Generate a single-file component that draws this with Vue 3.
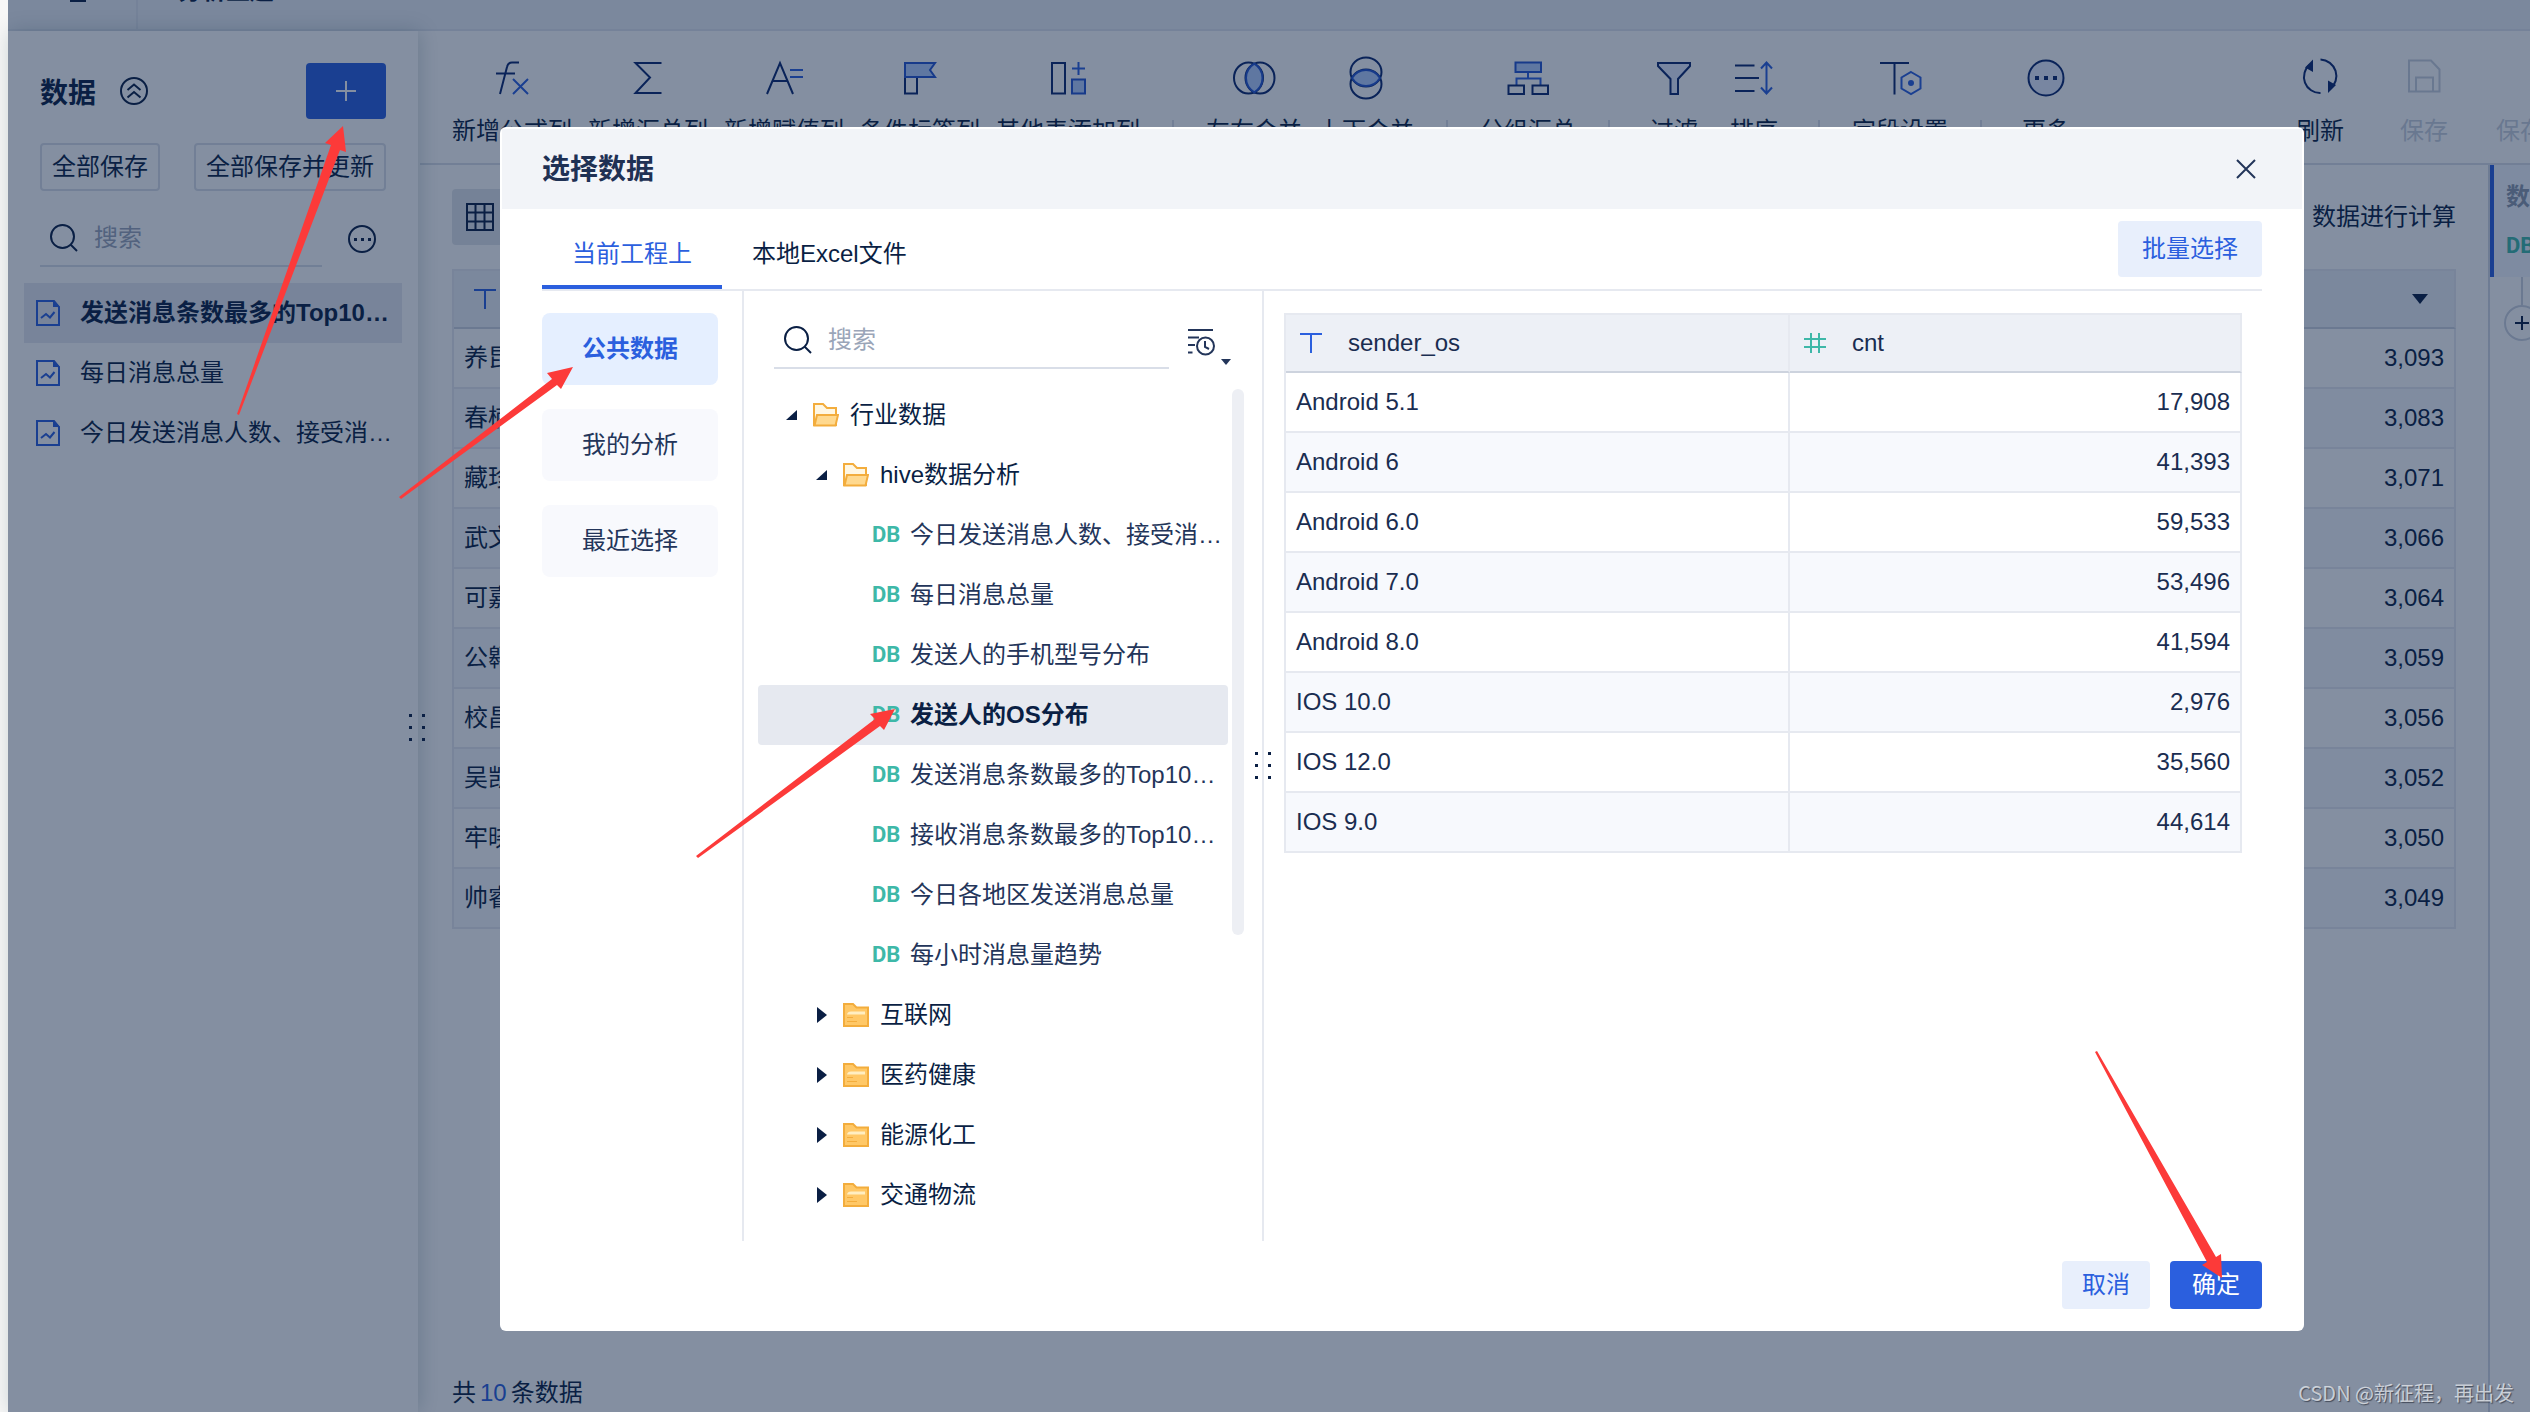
<script setup>
import { ref } from 'vue'

const tools = [
  [
    { icon: 'fx', label: '新增公式列' },
    { icon: 'sum', label: '新增汇总列' },
    { icon: 'assign', label: '新增赋值列' },
    { icon: 'flag', label: '条件标签列' },
    { icon: 'addcol', label: '其他表添加列' },
  ],
  [
    { icon: 'joinh', label: '左右合并' },
    { icon: 'joinv', label: '上下合并' },
  ],
  [{ icon: 'group', label: '分组汇总' }],
  [
    { icon: 'filter', label: '过滤' },
    { icon: 'sort', label: '排序' },
  ],
  [{ icon: 'field', label: '字段设置' }],
  [{ icon: 'more', label: '更多' }],
]

const datasets = ['发送消息条数最多的Top10…', '每日消息总量', '今日发送消息人数、接受消…']

const rankRows = [
  ['养昆', '3,093'],
  ['春楠', '3,083'],
  ['藏珍', '3,071'],
  ['武文', '3,066'],
  ['可嘉', '3,064'],
  ['公翱', '3,059'],
  ['校昌', '3,056'],
  ['吴凯', '3,052'],
  ['牢晓', '3,050'],
  ['帅睿', '3,049'],
]

const sources = ['公共数据', '我的分析', '最近选择']
const activeSource = ref(0)

const tree = [
  { level: 1, type: 'open', label: '行业数据' },
  { level: 2, type: 'open', label: 'hive数据分析' },
  { level: 3, type: 'db', label: '今日发送消息人数、接受消…' },
  { level: 3, type: 'db', label: '每日消息总量' },
  { level: 3, type: 'db', label: '发送人的手机型号分布' },
  { level: 3, type: 'db', label: '发送人的OS分布' },
  { level: 3, type: 'db', label: '发送消息条数最多的Top10…' },
  { level: 3, type: 'db', label: '接收消息条数最多的Top10…' },
  { level: 3, type: 'db', label: '今日各地区发送消息总量' },
  { level: 3, type: 'db', label: '每小时消息量趋势' },
  { level: 2, type: 'closed', label: '互联网' },
  { level: 2, type: 'closed', label: '医药健康' },
  { level: 2, type: 'closed', label: '能源化工' },
  { level: 2, type: 'closed', label: '交通物流' },
]
const activeNode = ref(5)

const preview = [
  ['Android 5.1', '17,908'],
  ['Android 6', '41,393'],
  ['Android 6.0', '59,533'],
  ['Android 7.0', '53,496'],
  ['Android 8.0', '41,594'],
  ['IOS 10.0', '2,976'],
  ['IOS 12.0', '35,560'],
  ['IOS 9.0', '44,614'],
]
</script>

<template>
  <div class="page">
    <svg class="sprite" width="0" height="0" aria-hidden="true">
      <symbol id="i-fx" viewBox="0 0 48 48">
        <path class="ln" d="M12 41L19 14Q20 9.500 24 9.500H31M8 20.500H27" />
        <path class="bl" d="M25 26L40 41M40 26L25 41" />
      </symbol>
      <symbol id="i-sum" viewBox="0 0 48 48">
        <path class="ln" d="M37.500 10H11.500L26 24.500L11.500 40H37.500" />
      </symbol>
      <symbol id="i-assign" viewBox="0 0 48 48">
        <path class="ln" d="M7 41L20 10L33 41M12.500 28H27.500" />
        <path class="bl" d="M30 17H43M30 24H43" />
      </symbol>
      <symbol id="i-flag" viewBox="0 0 48 48">
        <path class="ln" d="M9 24V40.500H21V24" />
        <path class="bf" d="M9 10H39L34 17L39 24H9Z" />
      </symbol>
      <symbol id="i-addcol" viewBox="0 0 48 48">
        <path class="ln" d="M8 10H21V40.500H8Z" />
        <path class="bl" d="M34.500 9V22M28 15.500H41" />
        <path class="bf" d="M28 26.500H41V40.500H28Z" />
      </symbol>
      <symbol id="i-joinh" viewBox="0 0 48 48">
        <ellipse class="ln" cx="18.500" cy="25" rx="14.500" ry="15.500" />
        <ellipse class="ln" cx="30" cy="25" rx="14.500" ry="15.500" />
        <path class="bf" d="M24.300 10.700Q32.500 16 32.500 25T24.300 39.300Q16 34 16 25T24.300 10.700Z" />
      </symbol>
      <symbol id="i-joinv" viewBox="0 0 48 48">
        <ellipse class="ln" cx="24" cy="19" rx="15.500" ry="14.500" />
        <ellipse class="ln" cx="24" cy="31" rx="15.500" ry="14.500" />
        <path class="bf" d="M10 25Q15 17 24 17T38 25Q33 33 24 33T10 25Z" />
      </symbol>
      <symbol id="i-group" viewBox="0 0 48 48">
        <path class="bl" d="M24 19V25M12.500 32V25.500H36.500V32" />
        <path class="bf" d="M11.500 9.500H37V19H11.500Z" />
        <path class="ln" d="M4.500 32.500H20V41H4.500ZM28.500 32.500H44V41H28.500Z" />
      </symbol>
      <symbol id="i-filter" viewBox="0 0 48 48">
        <path class="ln soft" d="M8 10H40V13L28 26V41H20.500V26L8 13Z" />
      </symbol>
      <symbol id="i-sort" viewBox="0 0 48 48">
        <path class="ln" d="M5 12.500H24.500M5 25H29M5 38H24.500" />
        <path class="bl" d="M36.500 10V40M31 15.500L36.500 9.500L42 15.500M31 34.500L36.500 40.500L42 34.500" />
      </symbol>
      <symbol id="i-field" viewBox="0 0 48 48">
        <path class="ln" d="M4 10H33M18.500 10V41.500" />
        <path class="bl" d="M35 19L44.500 24.500V35.500L35 41L25.500 35.500V24.500Z" />
        <circle class="bd" cx="35" cy="30" r="3" />
      </symbol>
      <symbol id="i-more" viewBox="0 0 48 48">
        <circle class="ln soft" cx="24" cy="25" r="17.500" />
        <path class="dk" d="M13 23H17V27H13ZM22 23H26V27H22ZM31 23H35V27H31Z" />
      </symbol>
      <symbol id="i-refresh" viewBox="0 0 48 48">
        <path class="ln" d="M24.500 40A16 16 0 0 1 14 11.500M24.500 6.500A16.500 16.500 0 0 1 34 36" />
        <path class="dk" d="M17 6.500V19L9 14.500ZM32 40V27.500L40 32Z" />
      </symbol>
      <symbol id="i-save" viewBox="0 0 48 48">
        <path class="gy" d="M9 7.500H31L39.500 16.500V38.500H9ZM16 38V24.500H33V38" />
      </symbol>
      <symbol id="i-search" viewBox="0 0 28 28">
        <circle class="nv" cx="12.500" cy="12.500" r="11.500" />
        <path class="nv" d="M20.500 20.500L27 27" />
      </symbol>
      <symbol id="i-text" viewBox="0 0 22 20">
        <path class="bl" d="M0 1H22M11 1V20" />
      </symbol>
      <symbol id="i-num" viewBox="0 0 22 20">
        <path class="gn" d="M0 6H22M0 14H22M7 0V20M15 0V20" />
      </symbol>
      <symbol id="i-open" viewBox="0 0 26 24">
        <path class="fo" d="M1 1H10L14 5H23V22H1Z" />
        <path class="ff" d="M4 12H25L22.500 22.500H1.500Z" />
      </symbol>
      <symbol id="i-closed" viewBox="0 0 26 24">
        <path class="fc" d="M1 1H10L13.500 4.500H25V23H1Z" />
        <path class="fh" d="M4 11.500Q4.500 8.500 8 8.500H22V11.500Z" />
        <path class="fl" d="M4 14.500H10M4 18.500H14" />
      </symbol>
      <symbol id="i-chart" viewBox="0 0 24 26">
        <path class="bl" d="M1 1H18L23 7V25H1Z" />
        <path class="bd" d="M17 0L24 7H17Z" />
        <path class="bl" d="M5 18L10 14L14 17.500L18.500 12" />
      </symbol>
    </svg>

    <div class="shell">
      <header class="topbar">
        <div class="top-left"><i class="top-mark"></i></div>
        <div class="top-title">分析主题</div>
      </header>

      <div class="workspace">
        <aside class="side">
          <div class="side-head">
            <h2>数据</h2>
            <svg width="28" height="28" viewBox="0 0 28 28">
              <circle class="nv" cx="14" cy="14" r="13" />
              <path class="nv" d="M7.500 13L14 7.500L20.500 13M7.500 20.500L14 15L20.500 20.500" />
            </svg>
            <button class="add" type="button" aria-label="+">
              <svg width="20" height="20" viewBox="0 0 20 20"><path class="wh" d="M0 10H20M10 0V20" /></svg>
            </button>
          </div>
          <div class="side-actions">
            <button type="button">全部保存</button>
            <button type="button">全部保存并更新</button>
          </div>
          <div class="side-search">
            <label class="search">
              <svg width="28" height="28"><use href="#i-search" /></svg>
              <input type="text" placeholder="搜索" />
            </label>
            <svg width="28" height="28" viewBox="0 0 28 28">
              <circle class="nv" cx="14" cy="14" r="13" />
              <path class="nd" d="M6 13H9V16H6ZM13 13H16V16H13ZM20 13H23V16H20Z" />
            </svg>
          </div>
          <ul class="datasets">
            <li v-for="(name, i) in datasets" :key="name" :class="{ on: i === 0 }">
              <svg width="24" height="26"><use href="#i-chart" /></svg>
              <span>{{ name }}</span>
            </li>
          </ul>
          <div class="grip side-grip"><i v-for="n in 6" :key="n"></i></div>
        </aside>

        <main class="main">
          <div class="toolbar">
            <div v-for="(group, g) in tools" :key="g" class="tool-group">
              <button v-for="t in group" :key="t.label" class="tool" type="button">
                <svg width="48" height="48"><use :href="'#i-' + t.icon" /></svg>
                <span>{{ t.label }}</span>
              </button>
            </div>
            <div class="tool-end">
              <button class="tool" type="button">
                <svg width="48" height="48"><use href="#i-refresh" /></svg>
                <span>刷新</span>
              </button>
              <button class="tool off" type="button" disabled>
                <svg width="48" height="48"><use href="#i-save" /></svg>
                <span>保存</span>
              </button>
              <button class="tool off" type="button" disabled>
                <svg width="48" height="48"></svg>
                <span>保存并更新</span>
              </button>
            </div>
          </div>

          <div class="content">
            <section class="sheet">
              <div class="sheet-bar">
                <button class="view" type="button" aria-label="grid">
                  <svg width="28" height="28" viewBox="0 0 28 28">
                    <path class="nv" d="M1 1H27V27H1ZM1 9.500H27M1 18.500H27M9.500 1V27M18.500 1V27" />
                  </svg>
                </button>
                <span>数据进行计算</span>
              </div>
              <table class="grid">
                <thead>
                  <tr>
                    <th><svg width="22" height="20"><use href="#i-text" /></svg></th>
                    <th class="num">
                      <svg width="16" height="10" viewBox="0 0 16 10"><path class="nd" d="M0 0H16L8 10Z" /></svg>
                    </th>
                  </tr>
                </thead>
                <tbody>
                  <tr v-for="r in rankRows" :key="r[0]">
                    <td>{{ r[0] }}</td>
                    <td class="num">{{ r[1] }}</td>
                  </tr>
                </tbody>
              </table>
              <p class="total"><span>共</span><b>10</b><span>条数据</span></p>
            </section>
            <aside class="steps">
              <div class="step">
                <strong>数据</strong>
                <span class="db">DB</span>
              </div>
              <i class="stem"></i>
              <button class="plus" type="button" aria-label="+">
                <svg width="14" height="14" viewBox="0 0 14 14"><path class="nv" d="M0 7H14M7 0V14" /></svg>
              </button>
            </aside>
          </div>
        </main>
      </div>
    </div>

    <div class="mask">
      <div class="dialog" role="dialog">
        <div class="dialog-head">
          <h1>选择数据</h1>
          <button type="button" aria-label="×">
            <svg width="20" height="20" viewBox="0 0 20 20"><path class="dx" d="M1 1L19 19M19 1L1 19" /></svg>
          </button>
        </div>

        <div class="dialog-tabs">
          <button class="tab on" type="button">当前工程上</button>
          <button class="tab" type="button">本地Excel文件</button>
          <button class="btn batch" type="button">批量选择</button>
        </div>

        <div class="dialog-body">
          <nav class="sources">
            <button
              v-for="(s, i) in sources"
              :key="s"
              type="button"
              :class="{ on: i === activeSource }"
              @click="activeSource = i"
            >
              {{ s }}
            </button>
          </nav>

          <section class="picker">
            <div class="picker-search">
              <label class="search">
                <svg width="28" height="28"><use href="#i-search" /></svg>
                <input type="text" placeholder="搜索" />
              </label>
              <svg width="44" height="52" viewBox="0 -12 44 52">
                <path class="dx" d="M0 3H25M0 10.500H11M0 18H7M0 25.500H4.500" />
                <circle class="dx" cx="17.500" cy="19" r="8.500" />
                <path class="dx" d="M17 14V20L21 22" />
                <path class="dd" d="M33 32H43L38 38Z" />
              </svg>
            </div>
            <ul class="tree">
              <li
                v-for="(n, i) in tree"
                :key="i"
                :class="['lv' + n.level, { on: i === activeNode }]"
                @click="activeNode = i"
              >
                <template v-if="n.type === 'db'">
                  <span class="db">DB</span>
                </template>
                <template v-else>
                  <svg v-if="n.type === 'open'" width="12" height="12" viewBox="0 0 12 12">
                    <path class="nd" d="M11 1V11H0Z" />
                  </svg>
                  <svg v-else width="12" height="16" viewBox="0 0 12 16"><path class="nd" d="M1 0V16L11 8Z" /></svg>
                  <svg class="folder" width="26" height="24"><use :href="'#i-' + n.type" /></svg>
                </template>
                <span>{{ n.label }}</span>
              </li>
            </ul>
            <i class="thumb"></i>
            <div class="grip picker-grip"><i v-for="n in 6" :key="n"></i></div>
          </section>

          <section class="preview">
            <table class="grid">
              <thead>
                <tr>
                  <th>
                    <div><svg width="22" height="20"><use href="#i-text" /></svg>sender_os</div>
                  </th>
                  <th>
                    <div><svg width="22" height="20"><use href="#i-num" /></svg>cnt</div>
                  </th>
                </tr>
              </thead>
              <tbody>
                <tr v-for="r in preview" :key="r[0]">
                  <td>{{ r[0] }}</td>
                  <td class="num">{{ r[1] }}</td>
                </tr>
              </tbody>
            </table>
          </section>
        </div>

        <div class="dialog-foot">
          <button class="btn cancel" type="button">取消</button>
          <button class="btn ok" type="button">确定</button>
        </div>
      </div>
    </div>

    <svg class="arrows" viewBox="0 0 2530 1412" aria-hidden="true">
      <path d="M237 414L331 145L325 143L343 126L346 152L340 150L239 415Z" />
      <path d="M399 497L552 379L547 373L573 367L561 389L557 385L401 499Z" />
      <path d="M696 856L875 719L870 714L895 709L884 730L880 726L698 858Z" />
      <path d="M2097 1051L2216 1257L2221 1254L2222 1278L2202 1265L2207 1262L2095 1052Z" />
    </svg>

    <p class="watermark">CSDN @新征程，再出发</p>
  </div>
</template>

<style>
body {
  margin: 0;
  background: #f7f7f7;
}
</style>

<style scoped>
* {
  box-sizing: border-box;
}
.page {
  position: relative;
  height: 100vh;
  min-height: 1100px;
  padding-left: 8px;
  overflow: hidden;
  font: 24px/32px "Liberation Sans", "Noto Sans CJK SC", sans-serif;
  color: #0a1f44;
}
.sprite {
  position: absolute;
}
svg {
  display: block;
  flex: none;
}
button,
input {
  font: inherit;
  color: inherit;
  border: 0;
  background: none;
  padding: 0;
  margin: 0;
}
h1,
h2,
p,
ul {
  margin: 0;
  padding: 0;
  list-style: none;
}

.ln,
.bl,
.bf,
.gy,
.nv,
.wh,
.dx,
.gn {
  fill: none;
  stroke-width: 2px;
}
.ln {
  stroke: #0a276e;
}
.bl {
  stroke: #2b5fde;
}
.bf {
  stroke: #2455d0;
  fill: #b4cfff;
}
.soft {
  fill: #e6ecff;
}
.gy {
  stroke: #c9d0dc;
}
.nv {
  stroke: #0a1f44;
}
.wh {
  stroke: #fff;
}
.dx {
  stroke: #23355a;
}
.gn {
  stroke: #3eb8a8;
}
.bd {
  fill: #2b5fde;
}
.dk {
  fill: #0a276e;
}
.nd {
  fill: #0a1f44;
}
.dd {
  fill: #23355a;
}
.fo {
  fill: #fff7e3;
  stroke: #f3ad3d;
  stroke-width: 2px;
}
.ff {
  fill: #ffd98f;
  stroke: #f3ad3d;
  stroke-width: 2px;
}
.fc {
  fill: #ffc867;
  stroke: #f3ad3d;
  stroke-width: 2px;
}
.fh {
  fill: #ffeec2;
}
.fl {
  stroke: #f3ad3d;
}

.shell {
  display: flex;
  flex-direction: column;
  height: 100%;
  background: #fff;
}
.topbar {
  display: flex;
  flex: none;
  height: 31px;
  overflow: hidden;
  background: #ecf0f6;
  border-bottom: 2px solid #e0e5ee;
}
.top-left {
  width: 130px;
  border-right: 2px solid #e0e5ee;
  padding-left: 62px;
}
.top-mark {
  display: block;
  width: 16px;
  height: 2px;
  background: #0a1f44;
}
.top-title {
  margin-top: -25px;
  padding-left: 40px;
  font-weight: 700;
}
.workspace {
  display: flex;
  flex: 1;
  min-height: 0;
}

.side {
  position: relative;
  z-index: 1;
  flex: none;
  width: 410px;
  background: #fff;
  box-shadow: 2px 0 20px rgba(10, 50, 60, 0.2);
}
.side-head {
  display: flex;
  align-items: center;
  gap: 24px;
  padding: 32px 32px 0;
}
.side-head h2 {
  padding-top: 6px;
  font-size: 28px;
}
.add {
  display: grid;
  place-items: center;
  width: 80px;
  height: 56px;
  margin-left: auto;
  border-radius: 4px;
  background: #2b5fde;
}
.side-actions {
  display: flex;
  justify-content: space-between;
  padding: 24px 32px 0;
}
.side-actions button {
  height: 48px;
  padding: 0 10px;
  border: 2px solid #dadfe8;
  border-radius: 4px;
}
.search {
  display: flex;
  align-items: center;
  gap: 16px;
  min-width: 0;
  height: 56px;
  padding-left: 10px;
  border-bottom: 2px solid #d9dee8;
}
.search input {
  flex: 1;
  min-width: 0;
  outline: 0;
}
.search input::placeholder {
  color: #9aa5b8;
  opacity: 1;
}
.side-search {
  display: flex;
  align-items: center;
  gap: 26px;
  padding: 20px 42px 0 32px;
}
.side-search .search {
  flex: 1;
}
.datasets {
  padding: 16px 16px 0;
}
.datasets li {
  display: flex;
  align-items: center;
  gap: 20px;
  height: 60px;
  padding-left: 12px;
  white-space: nowrap;
}
.datasets .on {
  background: #e6e9f0;
  font-weight: 700;
}
.grip {
  position: absolute;
  display: grid;
  grid-template-columns: 3px 3px;
  gap: 9px 10px;
}
.grip i {
  height: 3px;
  background: #0a1f44;
}
.side-grip {
  right: -7px;
  bottom: 48%;
  margin-bottom: 8px;
}
.picker-grip {
  right: -9px;
  top: 461px;
}

.main {
  display: flex;
  flex: 1;
  flex-direction: column;
  min-width: 0;
  padding-left: 2px;
}
.toolbar {
  display: flex;
  flex: none;
  padding: 22px 0 16px 32px;
  border-bottom: 2px solid #dadfe8;
  overflow: hidden;
}
.tool-group {
  display: flex;
  gap: 16px;
}
.tool-group + .tool-group {
  position: relative;
  margin-left: 66px;
}
.tool-group + .tool-group::before {
  content: "";
  position: absolute;
  left: -34px;
  top: 67px;
  width: 2px;
  height: 24px;
  background: #dadfe8;
}
.tool {
  display: flex;
  flex: none;
  flex-direction: column;
  align-items: center;
  gap: 14px;
  min-width: 64px;
}
.tool.off {
  color: #c9d0dc;
}
.tool-end {
  display: flex;
  gap: 40px;
  width: 242px;
  margin-left: auto;
  overflow: hidden;
}

.content {
  display: flex;
  flex: 1;
  min-height: 0;
}
.sheet {
  display: flex;
  flex: 1;
  flex-direction: column;
  padding: 24px 32px 3px;
}
.sheet-bar {
  display: flex;
  align-items: center;
  justify-content: space-between;
  margin-bottom: 24px;
}
.view {
  display: grid;
  place-items: center;
  width: 56px;
  height: 56px;
  border-radius: 4px;
  background: #e1e5ea;
}
.total {
  display: flex;
  gap: 4px;
  margin-top: auto;
}
.total b {
  font-weight: 400;
  color: #2b5fde;
}
.steps {
  width: 42px;
  overflow: hidden;
  border-left: 2px solid #d3d9e4;
}
.step {
  display: flex;
  flex-direction: column;
  gap: 20px;
  height: 112px;
  padding: 16px 0 0 12px;
  border-left: 4px solid #2b5fde;
  background: #f3f7ff;
  white-space: nowrap;
}
.step strong {
  color: #8c98ad;
}
.stem {
  display: block;
  width: 2px;
  height: 28px;
  margin-left: 31px;
  background: #ccd3df;
}
.plus {
  display: grid;
  place-items: center;
  width: 36px;
  height: 36px;
  margin-left: 14px;
  border: 2px solid #ccd3df;
  border-radius: 50%;
}

.grid {
  width: 100%;
  border-spacing: 0;
  border-left: 2px solid #e6e9f0;
  table-layout: fixed;
}
.grid th,
.grid td {
  height: 60px;
  padding: 0 10px;
  border-right: 2px solid #e6e9f0;
  border-bottom: 2px solid #e6e9f0;
  text-align: left;
  font-weight: 400;
}
.grid th {
  padding: 0 14px;
  background: #edf0f6;
  border-top: 2px solid #e6e9f0;
  border-bottom-color: #cdd3de;
}
.grid th div {
  display: flex;
  align-items: center;
  gap: 26px;
}
.grid tr:nth-child(even) td {
  background: #f7f9fd;
}
.grid .num {
  text-align: right;
}
.sheet th {
  padding: 0 26px 0 20px;
}
.sheet th.num svg {
  margin-left: auto;
}
.preview th:first-child {
  width: 504px;
}

.db {
  font: 700 22px/26px "Liberation Sans Narrow", Roboto, sans-serif;
  color: #3eb8a8;
}

.mask {
  position: absolute;
  z-index: 2;
  inset: 0 0 0 8px;
  display: flex;
  padding: 127px 226px 81px 492px;
  background: rgba(10, 31, 68, 0.5);
}
.dialog {
  display: flex;
  flex: 1;
  flex-direction: column;
  min-width: 0;
  border-radius: 6px;
  background: #fff;
}
.dialog-head {
  display: flex;
  align-items: center;
  justify-content: space-between;
  height: 80px;
  margin: 2px 2px 0;
  padding: 0 46px 0 40px;
  background: #f2f4f8;
}
.dialog-head h1 {
  padding-top: 2px;
  font-size: 28px;
  color: #1f3154;
}
.dialog-tabs {
  display: flex;
  height: 82px;
  margin: 0 42px;
  border-bottom: 2px solid #e6e9f0;
}
.tab {
  padding: 10px 30px 0;
}
.tab.on {
  color: #2b5fde;
  border-bottom: 4px solid #2b5fde;
  padding-top: 14px;
}
.btn {
  height: 48px;
  border-radius: 4px;
  background: #e8effc;
  color: #2b5fde;
}
.batch {
  width: 144px;
  height: 56px;
  margin: 12px 0 0 auto;
}
.dialog-body {
  display: flex;
  flex: 1;
  margin: 0 42px;
}
.sources {
  display: flex;
  flex-direction: column;
  gap: 24px;
  width: 202px;
  padding: 22px 24px 0 0;
  border-right: 2px solid #e6e9f0;
}
.sources button {
  height: 72px;
  border-radius: 8px;
  background: #f8f9fd;
  color: #23355a;
}
.sources .on {
  background: #e5efff;
  color: #2b5fde;
  font-weight: 700;
}
.picker {
  position: relative;
  width: 520px;
  padding: 22px 34px 0 14px;
  border-right: 2px solid #e6e9f0;
}
.picker-search {
  display: flex;
  align-items: center;
  gap: 19px;
  margin-right: -4px;
  padding-left: 16px;
}
.picker-search .search {
  flex: 1;
}
.tree {
  padding-top: 16px;
}
.tree li {
  display: flex;
  align-items: center;
  height: 60px;
  border-radius: 4px;
  white-space: nowrap;
}
.folder {
  margin: 0 11px 0 15px;
}
.lv1 {
  padding-left: 28px;
}
.lv2 {
  padding-left: 58px;
}
.lv3 {
  padding-left: 114px;
  color: #23355a;
}
.lv3 .db {
  width: 38px;
}
.tree .on {
  background: #e6e9f0;
  color: #0a1f44;
  font-weight: 700;
}
.thumb {
  position: absolute;
  right: 18px;
  top: 98px;
  width: 12px;
  height: 546px;
  border-radius: 6px;
  background: #edeff4;
}
.preview {
  flex: 1;
  padding: 22px 20px 0;
  color: #1a2d51;
}
.dialog-foot {
  display: flex;
  justify-content: flex-end;
  gap: 20px;
  padding: 20px 42px 22px;
}
.cancel {
  width: 88px;
}
.ok {
  width: 92px;
  background: #2b5fde;
  color: #fff;
}
.arrows {
  position: absolute;
  z-index: 3;
  left: 0;
  top: 0;
  width: 100%;
  pointer-events: none;
}
.arrows path {
  fill: #fc3a39;
}
.watermark {
  position: absolute;
  z-index: 3;
  right: 16px;
  bottom: 3px;
  font: 20px/32px "Noto Sans CJK SC", sans-serif;
  color: rgba(235, 238, 242, 0.75);
  text-shadow: 1px 1px 1px rgba(40, 45, 60, 0.7);
}
</style>
